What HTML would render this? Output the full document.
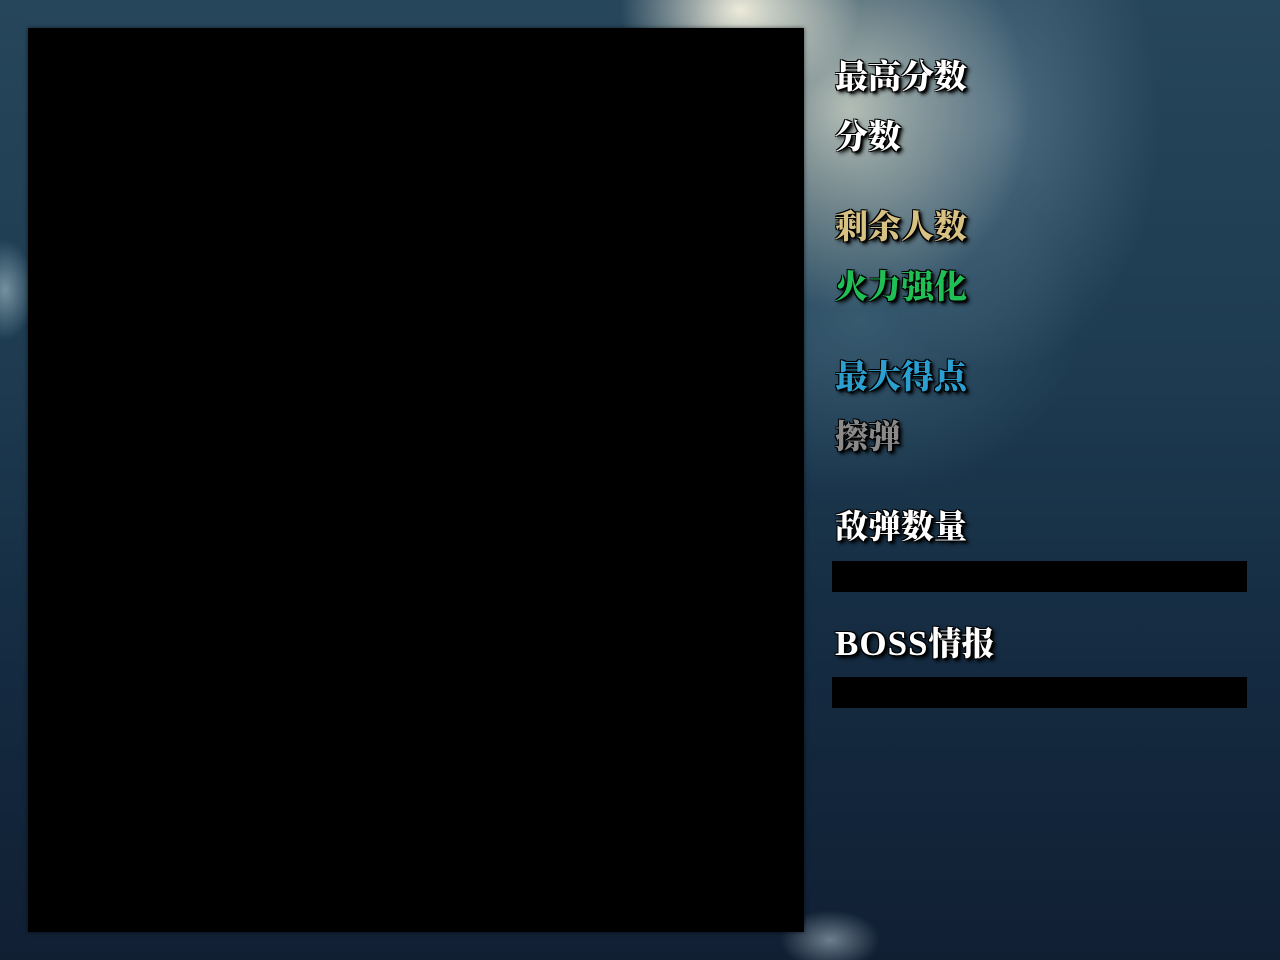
<!DOCTYPE html>
<html><head><meta charset="utf-8"><style>
html,body{margin:0;padding:0}
body{width:1280px;height:960px;overflow:hidden;position:relative;
background:
radial-gradient(ellipse 120px 90px at 740px 10px, rgba(255,250,230,0.9), rgba(255,250,230,0) 100%),
radial-gradient(ellipse 180px 200px at 850px 110px, rgba(215,220,205,0.8), rgba(200,210,205,0) 100%),
radial-gradient(ellipse 160px 250px at 1000px 120px, rgba(110,140,160,0.55), rgba(110,140,160,0) 100%),
radial-gradient(ellipse 220px 180px at 860px 320px, rgba(80,120,140,0.5), rgba(80,120,140,0) 100%),
radial-gradient(ellipse 30px 50px at 5px 290px, rgba(170,200,210,0.6), rgba(170,200,210,0) 100%),
radial-gradient(ellipse 50px 30px at 830px 940px, rgba(200,220,230,0.5), rgba(200,220,230,0) 100%),
linear-gradient(180deg,#26465c 0%,#1d3a50 40%,#142a40 70%,#111f33 100%);
font-family:"Liberation Serif","Noto Serif CJK SC",serif;}
.box{position:absolute;left:28px;top:28px;width:776px;height:904px;background:#000;box-shadow:0 0 4px rgba(0,0,0,.6)}
.t{position:absolute;left:835px;font-size:33px;font-weight:900;line-height:36px;white-space:nowrap;
text-shadow:-1px -1px 0 #000,1px -1px 0 #000,-1px 1px 0 #000,1px 1px 0 #000,3px 3px 4px #000,2px 2px 2px #000}
.w{color:#fff}.y{color:#d8c283}.g{color:#1fbf55}.b{color:#2a9fd0}.gr{color:#8a8a8a}
.bar{position:absolute;left:832px;width:415px;height:31px;background:#000}
.lat{font-size:35px;letter-spacing:1px}
</style></head><body>
<div class="box"></div>
<div class="t w" style="top:60px">最高分数</div>
<div class="t w" style="top:120px">分数</div>
<div class="t y" style="top:210px">剩余人数</div>
<div class="t g" style="top:270px">火力强化</div>
<div class="t b" style="top:360px">最大得点</div>
<div class="t gr" style="top:420px">擦弹</div>
<div class="t w" style="top:510px">敌弹数量</div>
<div class="bar" style="top:561px"></div>
<div class="t w" style="top:626px"><span class="lat">BOSS</span>情报</div>
<div class="bar" style="top:677px"></div>
</body></html>
